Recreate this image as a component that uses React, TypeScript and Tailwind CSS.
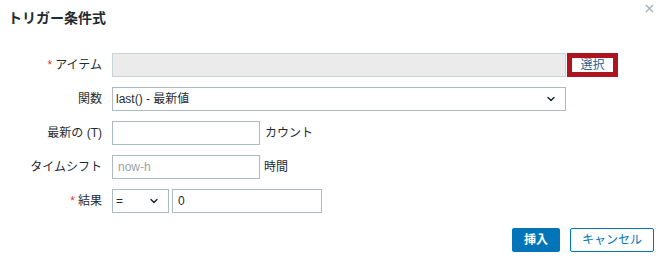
import { X, ChevronDown } from "lucide-react";

const font = "font-['Liberation_Sans','Noto_Sans_CJK_JP',sans-serif]";

function Label({ text, required }: { text: string; required?: boolean }) {
  return (
    <div className="w-[102px] shrink-0 text-right text-[12px] text-[#1f2c33] pr-0">
      {required && <span className="text-[#e33734] mr-[3px]">*</span>}
      {text}
    </div>
  );
}

function FakeSelect({ value, width }: { value: string; width: string }) {
  return (
    <div
      className={`${width} h-[24px] border border-[#acbbc2] bg-white flex items-center justify-between pl-[3px] pr-[8px] text-[12px] text-[#1f2c33]`}
    >
      <span>{value}</span>
      <ChevronDown className="h-[12px] w-[12px] text-[#1f2c33]" strokeWidth={3} />
    </div>
  );
}

export default function App() {
  return (
    <div className={`w-[658px] h-[259px] bg-white relative ${font}`}>
      <div className="flex items-center justify-between pl-[8px] pt-[8px]">
        <h1 className="text-[14px] font-bold text-[#1f2c33] leading-[20px]">トリガー条件式</h1>
      </div>
      <X className="absolute right-[2px] top-[2px] h-[13px] w-[13px] text-[#a8b4ba]" strokeWidth={2.5} />

      <div className="flex flex-col gap-[10px] mt-[25px]">
        <div className="flex items-center gap-[10px]">
          <Label text="アイテム" required />
          <div className="w-[454px] h-[24px] border border-[#cbd3d7] bg-[#ebebeb]" />
          <button className="-ml-[9px] w-[51px] h-[24px] border-[5px] border-[#ae141f] bg-white text-[12px] text-[#2f5f8f] leading-none">
            選択
          </button>
        </div>

        <div className="flex items-center gap-[10px]">
          <Label text="関数" />
          <FakeSelect value="last() - 最新値" width="w-[454px]" />
        </div>

        <div className="flex items-center gap-[10px]">
          <Label text="最新の (T)" />
          <div className="flex items-center gap-[5px]">
            <div className="w-[148px] h-[24px] border border-[#acbbc2] bg-white" />
            <span className="text-[12px] text-[#1f2c33]">カウント</span>
          </div>
        </div>

        <div className="flex items-center gap-[10px]">
          <Label text="タイムシフト" />
          <div className="flex items-center gap-[4px]">
            <div className="w-[148px] h-[24px] border border-[#acbbc2] bg-white flex items-center pl-[5px] text-[12px] text-[#9aa3a8]">
              now-h
            </div>
            <span className="text-[12px] text-[#1f2c33]">時間</span>
          </div>
        </div>

        <div className="flex items-center gap-[10px]">
          <Label text="結果" required />
          <div className="flex items-center gap-[3px]">
            <FakeSelect value="=" width="w-[57px]" />
            <div className="w-[150px] h-[24px] border border-[#acbbc2] bg-white flex items-center pl-[5px] text-[12px] text-[#1f2c33]">
              0
            </div>
          </div>
        </div>
      </div>

      <div className="flex justify-end gap-[10px] pr-[4px] mt-[15px]">
        <button className="w-[48px] h-[24px] rounded-[2px] bg-[#0275b8] text-white text-[12px] font-bold">
          挿入
        </button>
        <button className="w-[84px] h-[24px] rounded-[2px] border border-[#0275b8] bg-white text-[#0275b8] text-[12px]">
          キャンセル
        </button>
      </div>
    </div>
  );
}
